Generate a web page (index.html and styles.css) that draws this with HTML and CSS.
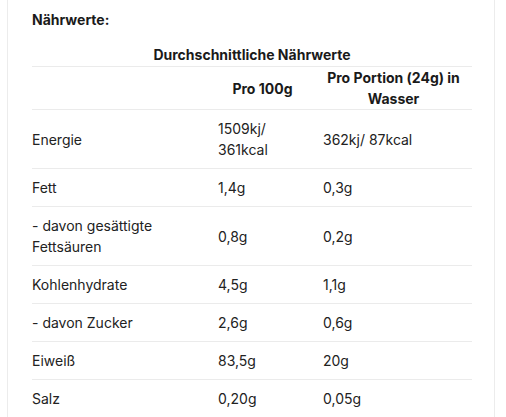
FILE: index.html
```html
<!DOCTYPE html>
<html lang="de">
<head>
<meta charset="utf-8">
<link rel="stylesheet" href="styles.css">
</head>
<body>
<div class="panel">
  <h3 class="title">Nährwerte:</h3>
  <table class="nutri">
    <caption>Durchschnittliche Nährwerte</caption>
    <colgroup>
      <col class="c1"><col class="c2"><col class="c3">
    </colgroup>
    <thead>
      <tr><th></th><th>Pro 100g</th><th>Pro Portion (24g) in Wasser</th></tr>
    </thead>
    <tbody>
      <tr><td>Energie</td><td>1509kj/ 361kcal</td><td>362kj/ 87kcal</td></tr>
      <tr><td>Fett</td><td>1,4g</td><td>0,3g</td></tr>
      <tr><td>- davon gesättigte Fettsäuren</td><td>0,8g</td><td>0,2g</td></tr>
      <tr><td>Kohlenhydrate</td><td>4,5g</td><td>1,1g</td></tr>
      <tr><td>- davon Zucker</td><td>2,6g</td><td>0,6g</td></tr>
      <tr><td>Eiweiß</td><td>83,5g</td><td>20g</td></tr>
      <tr><td>Salz</td><td>0,20g</td><td>0,05g</td></tr>
    </tbody>
  </table>
</div>
</body>
</html>
```
FILE: styles.css
```css
html, body {
  margin: 0;
  padding: 0;
  background: #fff;
}
body {
  font-family: Inter, "Liberation Sans", sans-serif;
  font-size: 14px;
  color: #222;
}
.panel {
  margin: 0 11px 0 7px;
  border-left: 1px solid #ececec;
  border-right: 1px solid #ececec;
  padding: 10px 21px 0 24px;
  min-height: 417px;
  box-sizing: border-box;
}
.title {
  margin: 0 0 15px 0;
  font-size: 14px;
  line-height: 20px;
  font-weight: 700;
  color: #1a1a1a;
}
.nutri {
  width: 440px;
  border-collapse: collapse;
  table-layout: fixed;
}
.nutri caption {
  font-weight: 700;
  line-height: 20px;
  padding-bottom: 1px;
  text-align: center;
  color: #1a1a1a;
}
.c1 { width: 178px; }
.c2 { width: 105px; }
.c3 { width: 157px; }
.nutri th {
  font-weight: 700;
  line-height: 21px;
  padding: 0 8px;
  text-align: center;
  vertical-align: middle;
  border-top: 1px solid #ebebeb;
  color: #1a1a1a;
}
.nutri td {
  line-height: 21px;
  padding: 8px 8px 8px 8px;
  text-align: left;
  vertical-align: middle;
  border-top: 1px solid #ebebeb;
}
.nutri td:first-child {
  padding-left: 0;
}
.nutri th:first-child {
  padding-left: 0;
}
```
